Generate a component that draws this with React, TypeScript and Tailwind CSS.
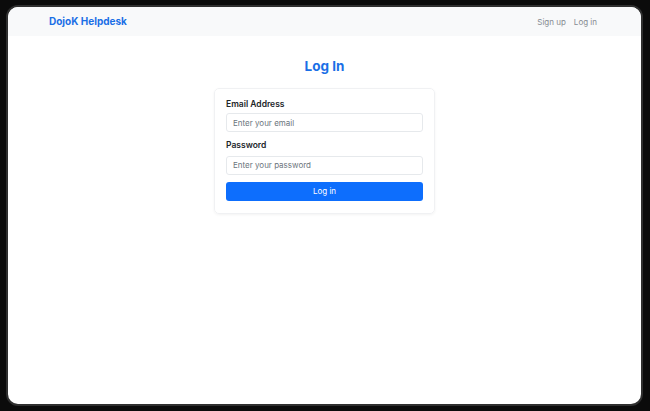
export default function App() {
  return (
    <div className="w-[650px] h-[411px] bg-[#0b0b0b] pt-[5px] pl-[6px] overflow-hidden" style={{ fontFamily: 'Inter, "Noto Sans", sans-serif' }}>
      <div className="w-[637px] h-[401px] rounded-[12px] border-2 border-[#2f2f2f] bg-white overflow-hidden flex flex-col">
        {/* Navbar */}
        <nav className="h-[29px] shrink-0 bg-[#f8f9fa] flex items-center justify-between pl-[41px] pr-[44px]">
          <span className="text-[10px] font-bold text-[#1a6fe6]">DojoK Helpdesk</span>
          <div className="flex items-center gap-[8px] text-[8px] text-[#868b91]">
            <span>Sign up</span>
            <span>Log in</span>
          </div>
        </nav>

        <main className="flex flex-col items-center pt-[24px]">
          <h1 className="text-[13.5px] font-bold text-[#1a6fe6] leading-none">Log In</h1>

          <div className="mt-[14px] w-[221px] rounded-[5px] border border-[#f0f1f3] shadow-[0_1px_3px_rgba(0,0,0,0.05)] px-[11px] pt-[11px] pb-[12px]">
            <label className="block text-[8.5px] font-semibold text-[#212529] leading-none">Email Address</label>
            <div className="mt-[5px] h-[19px] rounded-[3px] border border-[#e6e9ec] flex items-center px-[6px] text-[8px] text-[#6c757d]">
              Enter your email
            </div>

            <label className="block mt-[9px] text-[8.5px] font-semibold text-[#212529] leading-none">Password</label>
            <div className="mt-[6px] h-[19px] rounded-[3px] border border-[#e6e9ec] flex items-center px-[6px] text-[8px] text-[#6c757d]">
              Enter your password
            </div>

            <button className="mt-[7px] w-full h-[19px] rounded-[3px] bg-[#0d6efd] text-white text-[8px] flex items-center justify-center">
              Log in
            </button>
          </div>
        </main>
      </div>
    </div>
  )
}
